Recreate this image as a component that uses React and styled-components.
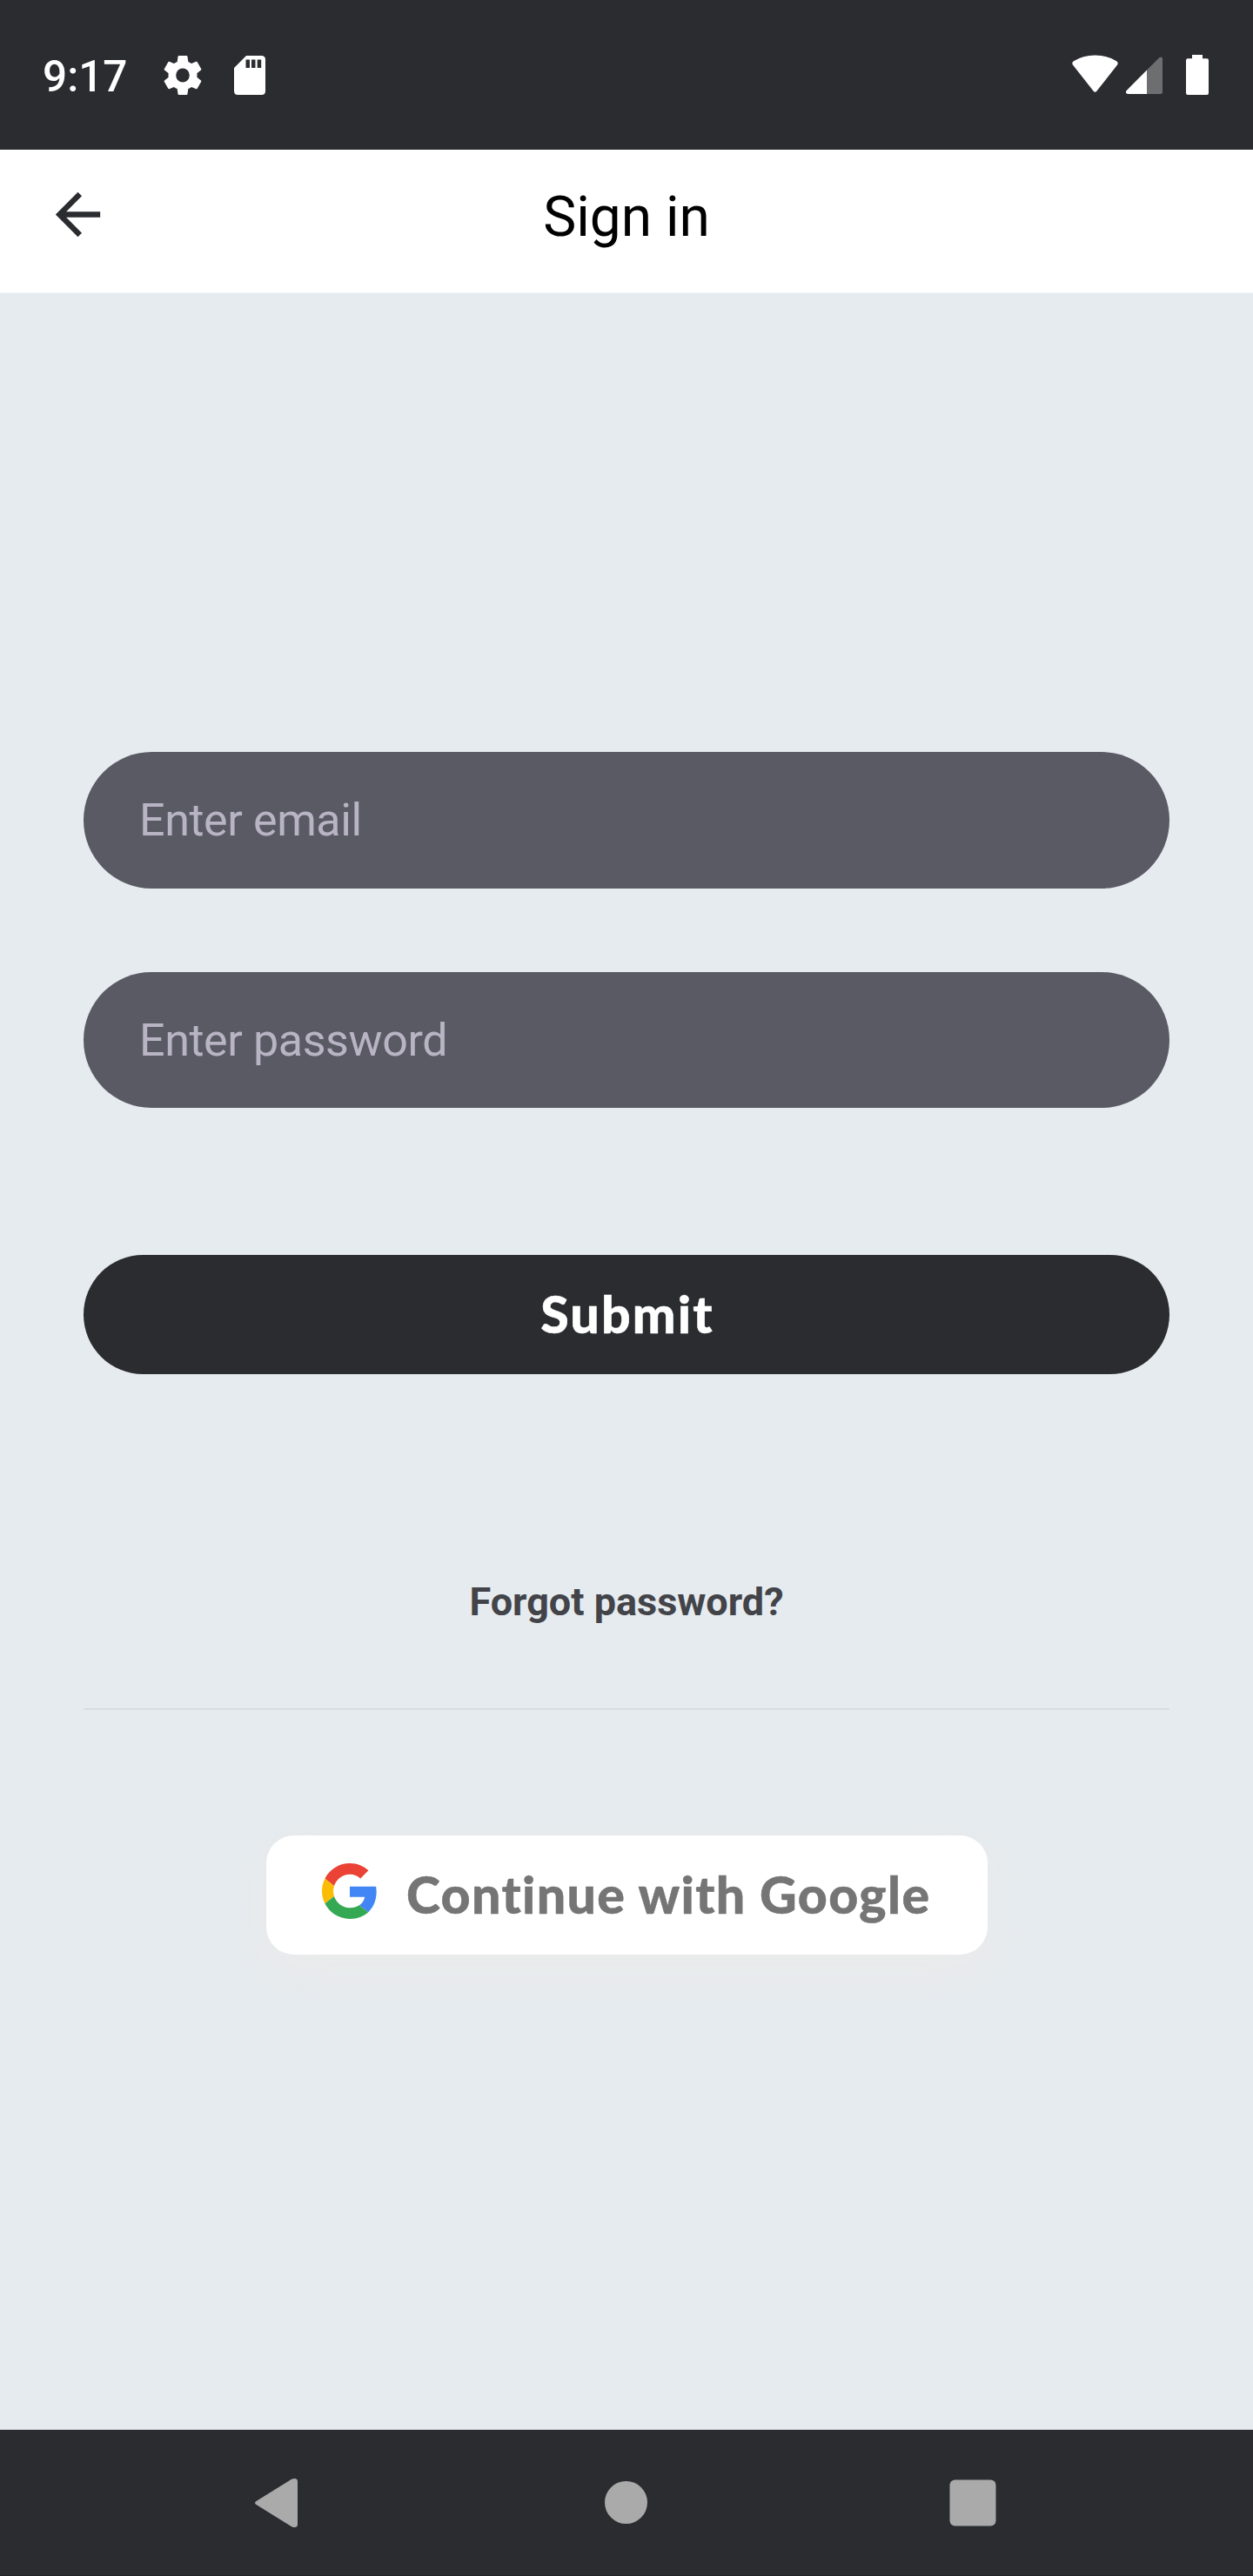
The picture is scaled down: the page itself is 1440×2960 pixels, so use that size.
import React from "react";
import styled, { createGlobalStyle, css } from "styled-components";

const Global = createGlobalStyle`
  * { box-sizing: border-box; }
  body { margin: 0; background: #e6ebef; font-family: Roboto, sans-serif; }
  button, input { font: inherit; border: 0; }
`;

const Screen = styled.div`
  width: 1440px;
  height: 2960px;
  display: flex;
  flex-direction: column;
  background: #e6ebef;
`;

const StatusBar = styled.div`
  height: 172px;
  flex: none;
  display: flex;
  align-items: center;
  justify-content: space-between;
  padding: 0 51px 0 49px;
  background: #2b2c30;
  color: #fff;
`;

const StatusGroup = styled.div`
  display: flex;
  align-items: center;
`;

const Clock = styled.span`
  width: 139px;
  font-size: 49.5px;
  font-weight: 500;
  line-height: 58px;
  padding-top: 4px;
`;

const Glyph = styled.svg`
  display: block;
  flex: none;
  width: ${(p) => p.$w}px;
  height: ${(p) => p.$h}px;
  margin-left: ${(p) => p.$gap || 0}px;
`;

const Header = styled.header`
  height: 165px;
  flex: none;
  display: grid;
  grid-template-columns: 200px 1fr 200px;
  align-items: center;
  background: #fff;
  border-bottom: 1px solid #f1f4f6;
`;

const BackButton = styled.button`
  display: flex;
  width: 77px;
  height: 77px;
  margin: 0 0 15px 51px;
  padding: 0;
  background: none;
`;

const Title = styled.h1`
  margin: 0;
  padding-bottom: 9px;
  text-align: center;
  font-size: 64px;
  font-weight: 400;
  line-height: 76px;
  color: #000;
`;

const Main = styled.main`
  flex: 1;
  display: flex;
  flex-direction: column;
  align-items: center;
  padding: 527px 96px 0;
`;

const Form = styled.form`
  width: 100%;
  display: flex;
  flex-direction: column;
`;

const Field = styled.input`
  height: 156.5px;
  margin-bottom: 96.4px;
  padding: 0 64px;
  border-radius: 79px;
  background: #5a5a65;
  color: #b8b4c4;
  font-size: 52px;
  letter-spacing: -0.4px;
  outline: none;
  &::placeholder { color: #b8b4c4; opacity: 1; }
`;

const buttonText = css`
  font-family: Lato, sans-serif;
  font-size: 59px;
  font-weight: 900;
  line-height: 70px;
  font-variant-ligatures: none;
  -webkit-text-stroke: 0.5px currentColor;
`;

const Submit = styled.button`
  ${buttonText}
  height: 137.4px;
  margin-top: 71.8px;
  padding: 0 0 0 2px;
  border-radius: 69px;
  background: #2b2c30;
  color: #fff;
  letter-spacing: 2.2px;
`;

const Forgot = styled.a`
  margin-top: 235px;
  font-size: 45px;
  font-weight: 700;
  line-height: 54px;
  color: #434449;
`;

const Divider = styled.hr`
  width: 100%;
  height: 2px;
  margin: 95px 0 144px;
  border: 0;
  border-top: 1px solid #d1d6da;
  background: #dfe4e8;
`;

const GoogleButton = styled.button`
  ${buttonText}
  width: 829px;
  height: 137px;
  display: flex;
  align-items: center;
  padding: 0 0 0 64.5px;
  border-radius: 32px;
  background: #fff;
  color: #757575;
  box-shadow: 0 18px 48px rgba(255, 235, 220, 0.22);
  letter-spacing: 1.35px;
  white-space: nowrap;
`;

const GoogleLogo = styled(Glyph)`
  margin: 0 33px 9px 0;
`;

const NavBar = styled.nav`
  height: 168px;
  flex: none;
  display: flex;
  align-items: center;
  justify-content: space-between;
  padding: 0 293px 0 288px;
  background: #2b2c30;
  border-bottom: 1px solid #222327;
`;

const NavButton = styled.button`
  display: flex;
  padding: 0;
  background: none;
`;

const HomeButton = styled(NavButton)`
  padding-left: 4px;
`;

export default function App() {
  return (
    <Screen>
      <Global />
      <StatusBar>
        <StatusGroup>
          <Clock>9:17</Clock>
          <Glyph $w={44} $h={45} viewBox="2.4 2.4 19.2 19.2" preserveAspectRatio="none" fill="#fff">
            <path d="M19.14 12.94c.04-.3.06-.61.06-.94 0-.32-.02-.64-.07-.94l2.03-1.58c.18-.14.23-.41.12-.61l-1.92-3.32c-.12-.22-.37-.29-.59-.22l-2.39.96c-.5-.38-1.03-.7-1.62-.94l-.36-2.54c-.04-.24-.24-.41-.48-.41h-3.84c-.24 0-.43.17-.47.41l-.36 2.54c-.59.24-1.13.57-1.62.94l-2.39-.96c-.22-.08-.47 0-.59.22L2.74 8.87c-.12.21-.08.47.12.61l2.03 1.58c-.05.3-.09.63-.09.94s.02.64.07.94l-2.03 1.58c-.18.14-.23.41-.12.61l1.92 3.32c.12.22.37.29.59.22l2.39-.96c.5.38 1.03.7 1.62.94l.36 2.54c.05.24.24.41.48.41h3.84c.24 0 .44-.17.47-.41l.36-2.54c.59-.24 1.13-.56 1.62-.94l2.39.96c.22.08.47 0 .59-.22l1.92-3.32c.12-.22.07-.47-.12-.61l-2.01-1.58zM12 15.4a3.4 3.4 0 1 1 0-6.8 3.4 3.4 0 0 1 0 6.8z" />
          </Glyph>
          <Glyph $w={36} $h={45} $gap={37} viewBox="0 0 36 45">
            <path fill="#fff" fillRule="evenodd" d="M14 0H31.5Q36 0 36 4.5V40.5Q36 45 31.5 45H4.5Q0 45 0 40.5V14ZM13.5 4.5V14H18V4.5ZM20 4.5V14H24.5V4.5ZM26.7 4.5V14H31.2V4.5Z" />
          </Glyph>
        </StatusGroup>
        <StatusGroup>
          <Glyph $w={53} $h={46} viewBox="0 0 53 46" fill="#fff">
            <path d="M1.1 11.8Q-.8 9.2 1.8 7.3Q12.5.5 26.5.5T51.2 7.3Q53.8 9.2 51.9 11.8L28.5 41.5Q26.5 44 24.5 41.5Z" />
          </Glyph>
          <Glyph $w={42} $h={46} $gap={9} viewBox="0 0 42 46">
            <path fill="#6d6e70" d="M24 17.5L38 3.6Q42 .8 42 5V42.5Q42 45 39.5 45H24Z" />
            <path fill="#fff" d="M24 17.5V45H2.5Q-1.5 44.5 .7 41Z" />
          </Glyph>
          <Glyph $w={26} $h={46} $gap={27} viewBox="0 0 26 46" fill="#fff">
            <path d="M7 0H19V4.3H24Q26 4.3 26 6.3V44Q26 46 24 46H2Q0 46 0 44V6.3Q0 4.3 2 4.3H7Z" />
          </Glyph>
        </StatusGroup>
      </StatusBar>

      <Header>
        <BackButton aria-label="Back">
          <Glyph $w={77} $h={77} viewBox="0 0 24 24" fill="#2b2c30">
            <path d="M20 11H7.83l5.59-5.59L12 4l-8 8 8 8 1.41-1.41L7.83 13H20v-2z" />
          </Glyph>
        </BackButton>
        <Title>Sign in</Title>
      </Header>

      <Main>
        <Form>
          <Field type="text" placeholder="Enter email" />
          <Field type="password" placeholder="Enter password" />
          <Submit type="button">Submit</Submit>
        </Form>
        <Forgot>Forgot password?</Forgot>
        <Divider />
        <GoogleButton>
          <GoogleLogo $w={64} $h={64} viewBox="0 0 48 48">
            <path fill="#EA4335" d="M24 9.5c3.54 0 6.71 1.22 9.21 3.6l6.85-6.85C35.9 2.38 30.47 0 24 0 14.62 0 6.51 5.38 2.56 13.22l7.98 6.19C12.43 13.72 17.74 9.5 24 9.5z" />
            <path fill="#4285F4" d="M46.98 24.55c0-1.57-.15-3.09-.38-4.55H24v9.02h12.94c-.58 2.96-2.26 5.48-4.78 7.18l7.73 6c4.51-4.18 7.09-10.36 7.09-17.65z" />
            <path fill="#FBBC05" d="M10.53 28.59c-.48-1.45-.76-2.99-.76-4.59s.27-3.14.76-4.59l-7.98-6.19C.92 16.46 0 20.12 0 24c0 3.88.92 7.54 2.56 10.78l7.97-6.19z" />
            <path fill="#34A853" d="M24 48c6.48 0 11.93-2.13 15.89-5.81l-7.73-6c-2.15 1.45-4.92 2.3-8.16 2.3-6.26 0-11.57-4.22-13.47-9.91l-7.98 6.19C6.51 42.62 14.62 48 24 48z" />
          </GoogleLogo>
          Continue with Google
        </GoogleButton>
      </Main>

      <NavBar>
        <NavButton aria-label="Back">
          <Glyph $w={58} $h={60} viewBox="0 0 58 60" fill="#aaa">
            <path d="M6.5 28L47.5 2.5Q54 .5 54 5.5V54.5Q54 59.5 47.5 57.5L6.5 32Q3.5 30 6.5 28Z" />
          </Glyph>
        </NavButton>
        <HomeButton aria-label="Home">
          <Glyph $w={49} $h={49} viewBox="0 0 49 49" fill="#aaa">
            <circle cx="24.5" cy="24.5" r="24.5" />
          </Glyph>
        </HomeButton>
        <NavButton aria-label="Overview">
          <Glyph $w={58} $h={58} viewBox="0 0 58 58" fill="#aaa">
            <rect x="2.5" y="2.5" width="53" height="53" rx="6" />
          </Glyph>
        </NavButton>
      </NavBar>
    </Screen>
  );
}
